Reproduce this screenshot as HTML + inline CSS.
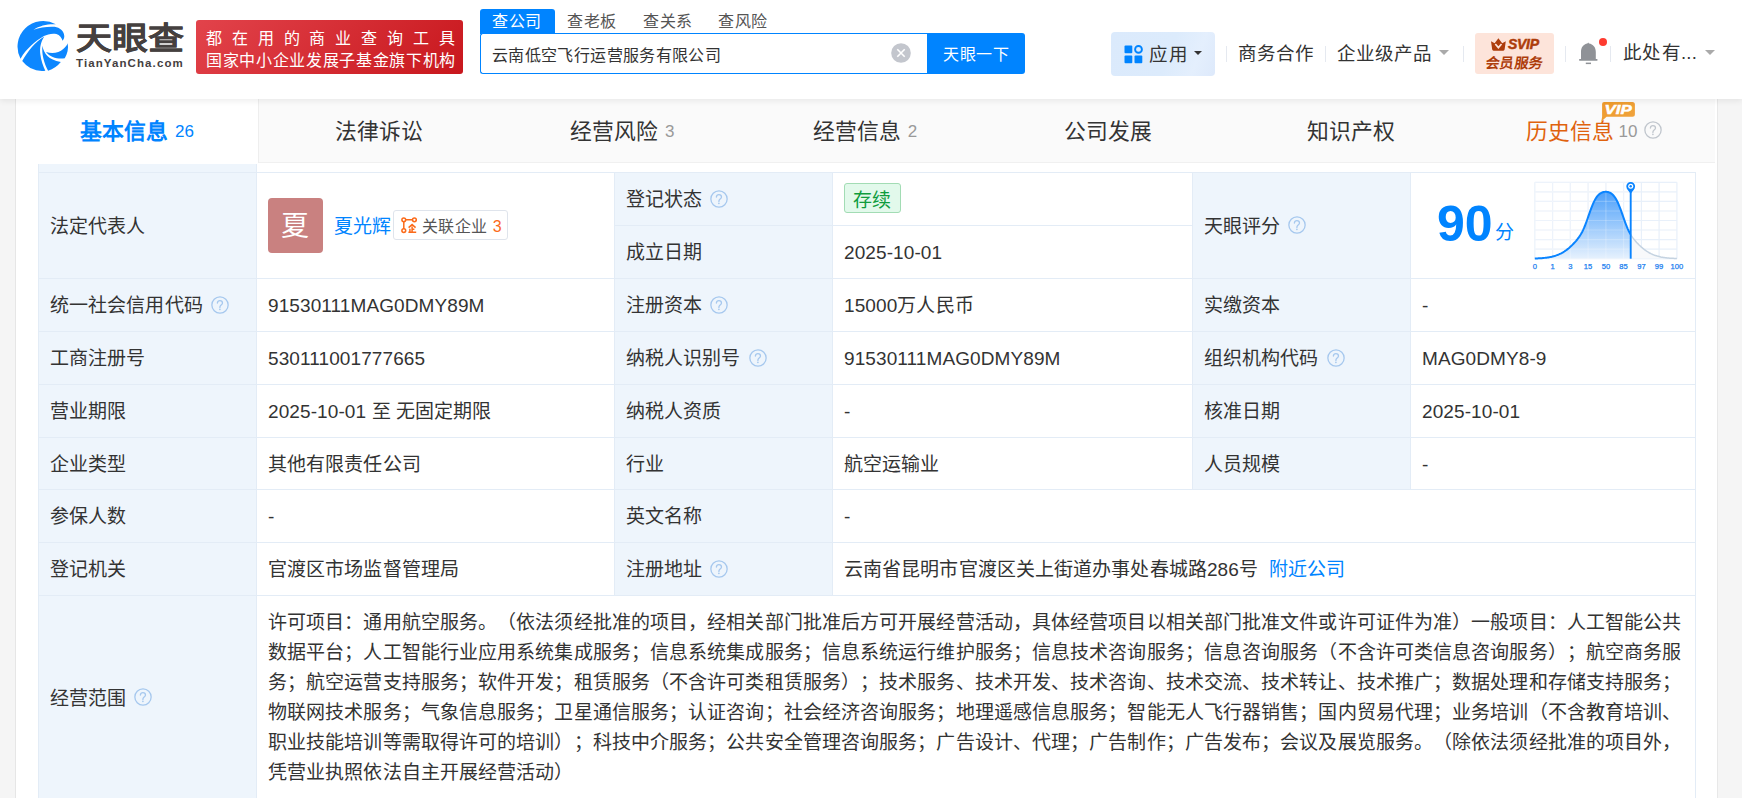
<!DOCTYPE html>
<html lang="zh-CN"><head><meta charset="utf-8">
<style>
*{box-sizing:border-box;margin:0;padding:0}
html,body{width:1742px;height:798px;overflow:hidden;background:#f5f5f5;font-family:"Liberation Sans",sans-serif;color:#333;text-spacing-trim:space-all}
.a{position:absolute}
#hdr{position:absolute;left:0;top:0;width:1742px;height:99px;background:#fff;box-shadow:0 2px 6px rgba(0,0,0,.075);z-index:5}
#panel{position:absolute;left:15px;top:99px;width:1703px;height:699px;background:#fff;border-left:1px solid #e6e6e6;border-right:1px solid #e8e8e8}
#tabs{position:absolute;left:16px;top:99px;width:1699px;height:64px;background:#fafafa;border-bottom:1px solid #f0f0f0;display:flex;z-index:3}
#tabs .t{width:242.83px;height:64px;display:flex;align-items:center;justify-content:center;line-height:28px;padding-top:2px;font-size:21.8px;color:#333;white-space:nowrap}
#tabs .t.on{width:242px;background:#fff;color:#0084ff;font-weight:bold}
#tabs .n{font-size:17px;color:#999;font-weight:normal;margin-left:7px;position:relative;top:0px}
#tabs .on .n{color:#0084ff}
.lbl{position:absolute;background:#eef5fc}
.hl{position:absolute;height:1px;background:#e3ecf6}
.vl{position:absolute;width:1px;background:#e3ecf6}
.tx{position:absolute;font-size:19px;line-height:24px;white-space:nowrap;color:#333}
.q{display:block;flex:none;margin-left:8px;margin-top:-3px}
.c{position:absolute;display:flex;align-items:center;padding-left:11px;padding-top:2px;font-size:19px;letter-spacing:0.1px;line-height:24px;white-space:nowrap;color:#333}
.av{display:inline-block;flex:none;width:55px;height:55px;border-radius:4px;background:#c98180;color:#fff;font-size:28px;line-height:58px;text-align:center;margin-right:11px;margin-top:-2px}
.lk{color:#0084ff}
.tag{display:inline-flex;align-items:center;height:30px;border:1px solid #dfe4ec;border-radius:3px;padding:0 5px 0 7px;font-size:16px;color:#555;margin-left:2px;margin-top:-3px}
.ok{display:inline-block;height:30px;width:57px;text-align:center;line-height:27.5px;padding-top:3px;padding-right:1px;border:1px solid #a2dcb4;background:#e2f9eb;color:#109c3e;border-radius:3px;margin-top:-5px}
.scope{font-size:19px;letter-spacing:0.1px;line-height:30px;color:#333;white-space:normal;word-break:break-all}
</style></head><body>
<div id="hdr">
  <svg class="a" style="left:15px;top:18px" width="55" height="55" viewBox="0 0 798 798"><g fill="#0d87ff">
<path d="M80 590 A372 372 0 0 1 592 92 C500 82 360 105 268 172 C360 140 470 122 575 128 C650 140 710 190 715 260 C717 290 705 315 690 330 C680 290 650 245 600 232 C540 218 470 235 420 262 C300 330 170 440 80 590Z"/>
<path d="M105 625 C190 480 290 350 425 270 C375 340 355 440 368 530 C378 620 410 700 440 767 A372 372 0 0 1 105 625Z"/>
<path d="M398 402 C420 520 480 600 665 640 A372 372 0 0 1 480 765 C420 650 385 520 398 402Z"/>
<path d="M450 492 C530 520 640 510 700 450 C735 420 755 395 765 368 C778 450 760 520 722 585 C620 600 510 570 450 492Z"/>
</g></svg>
  <div class="a" style="left:76px;top:22px;font-size:36px;line-height:40px;font-weight:bold;color:#45403f;-webkit-text-stroke:0.15px #45403f;transform:scaleY(0.85);transform-origin:0 0">天眼查</div>
  <div class="a" style="left:76px;top:57px;font-size:11.5px;line-height:13px;font-weight:bold;color:#45403f;letter-spacing:1.1px">TianYanCha.com</div>
  <div class="a" style="left:196px;top:20px;width:267px;height:54px;border-radius:3px;background:linear-gradient(135deg,#e2434b,#c8171d)"></div>
  <div class="a" style="left:206px;top:28px;font-size:16px;line-height:21px;color:#fff;letter-spacing:9.87px;white-space:nowrap">都在用的商业查询工具</div>
  <div class="a" style="left:206px;top:50px;font-size:16px;letter-spacing:0.66px;line-height:21px;color:#fff;white-space:nowrap">国家中小企业发展子基金旗下机构</div>

  <div class="a" style="left:480px;top:9px;width:75px;height:25px;background:#0084ff;border-radius:3px 3px 0 0"></div>
  <div class="a" style="left:492px;top:11px;font-size:16px;letter-spacing:0.6px;line-height:22px;color:#fff">查公司</div>
  <div class="a" style="left:567px;top:11px;font-size:16px;letter-spacing:0.6px;line-height:22px;color:#555">查老板</div>
  <div class="a" style="left:643px;top:11px;font-size:16px;letter-spacing:0.6px;line-height:22px;color:#555">查关系</div>
  <div class="a" style="left:718px;top:11px;font-size:16px;letter-spacing:0.6px;line-height:22px;color:#555">查风险</div>
  <div class="a" style="left:480px;top:33px;width:448px;height:41px;border:1px solid #0084ff;border-right:none;border-radius:3px 0 0 3px;background:#fff"></div>
  <div class="a" style="left:492px;top:45px;font-size:16px;letter-spacing:0.37px;line-height:22px;color:#333">云南低空飞行运营服务有限公司</div>
  <svg class="a" style="left:891px;top:43px" width="20" height="20" viewBox="0 0 20 20"><circle cx="10" cy="10" r="9.8" fill="#c3c6cd"/><path d="M6.3 6.3L13.7 13.7M13.7 6.3L6.3 13.7" stroke="#fff" stroke-width="1.6"/></svg>
  <div class="a" style="left:927px;top:33px;width:98px;height:41px;background:#0084ff;border-radius:0 3px 3px 0"></div>
  <div class="a" style="left:943px;top:44px;font-size:16px;letter-spacing:0.7px;line-height:22px;color:#fff">天眼一下</div>

  <div class="a" style="left:1111px;top:32px;width:104px;height:44px;background:linear-gradient(110deg,#dbeafc 0%,#dcebfc 55%,#e4effd 80%,#dde9fb 100%);border-radius:4px"></div>
  <svg class="a" style="left:1123.5px;top:44.5px" width="20" height="20" viewBox="0 0 20 20"><rect x="0.5" y="0.5" width="7.8" height="7.8" rx="1" fill="#0084ff"/><circle cx="14.5" cy="4.4" r="3.4" fill="none" stroke="#0084ff" stroke-width="1.9"/><rect x="0.5" y="10.5" width="7.8" height="7.8" rx="1" fill="#0084ff"/><rect x="10.5" y="10.5" width="7.8" height="7.8" rx="1" fill="#0084ff"/></svg>
  <div class="a" style="left:1149px;top:42.5px;font-size:18.5px;letter-spacing:0.8px;line-height:24px;color:#333">应用</div>
  <div class="a" style="left:1194px;top:51px;width:0;height:0;border-left:4.5px solid transparent;border-right:4.5px solid transparent;border-top:4.5px solid #333"></div>
  <div class="a" style="left:1226px;top:46px;width:1px;height:15.5px;background:#e5e9f0"></div>
  <div class="a" style="left:1238px;top:42px;font-size:18.5px;line-height:24px;color:#333">商务合作</div>
  <div class="a" style="left:1325px;top:46px;width:1px;height:15.5px;background:#e5e9f0"></div>
  <div class="a" style="left:1337px;top:42px;font-size:18.5px;line-height:24px;color:#333">企业级产品</div>
  <div class="a" style="left:1439px;top:50px;width:0;height:0;border-left:5px solid transparent;border-right:5px solid transparent;border-top:5px solid #aaa"></div>
  <div class="a" style="left:1463px;top:46px;width:1px;height:15.5px;background:#e5e9f0"></div>
  <div class="a" style="left:1475px;top:33px;width:79px;height:41px;background:#fde4da;border-radius:3px"></div>
  <svg class="a" style="left:1490px;top:38px" width="17" height="14" viewBox="0 0 17 14"><path d="M1 3.3 L4.6 5.2 L8.4 0.2 L12.2 5.2 L15.8 3.3 L14.6 11.6 Q14.4 12.7 13.3 12.7 L3.5 12.7 Q2.4 12.7 2.2 11.6Z" fill="#ad3d0b"/><path d="M5.3 6 L8.4 9.6 L11.5 6" stroke="#fde4da" stroke-width="1.7" fill="none"/></svg>
  <div class="a" style="left:1508px;top:36px;font-size:14px;line-height:17px;font-weight:bold;font-style:italic;color:#ad3d0b;-webkit-text-stroke:0.5px #ad3d0b;letter-spacing:-0.3px">SVIP</div>
  <div class="a" style="left:1484px;top:53.5px;font-size:14px;letter-spacing:0.5px;line-height:19px;font-weight:bold;color:#ad3d0b;transform:skewX(-8deg);transform-origin:0 100%">会员服务</div>
  <div class="a" style="left:1565px;top:46px;width:1px;height:15.5px;background:#e5e9f0"></div>
  <svg class="a" style="left:1578px;top:42px" width="21" height="23" viewBox="0 0 21 23"><path d="M10.2 0.4 L11 1.6 C15 2.2 17.8 5.2 17.8 10 L17.8 17 L19.4 17 L19.4 18.8 L1.2 18.8 L1.2 17 L3 17 L3 10 C3 5.2 5.6 2.2 9.4 1.6Z" fill="#8f9297"/><rect x="7.8" y="20.6" width="5.2" height="1.5" fill="#8f9297"/></svg>
  <div class="a" style="left:1598.8px;top:37.7px;width:8.2px;height:8.2px;border-radius:50%;background:#fe3b30"></div>
  <div class="a" style="left:1610px;top:46px;width:1px;height:15.5px;background:#e5e9f0"></div>
  <div class="a" style="left:1623px;top:41px;letter-spacing:0.3px;font-size:18.5px;line-height:24px;color:#333">此处有...</div>
  <div class="a" style="left:1705px;top:50px;width:0;height:0;border-left:5px solid transparent;border-right:5px solid transparent;border-top:5px solid #aaa"></div>
</div>

<div id="panel"></div>
<svg class="a" style="left:1599px;top:100px;z-index:4" width="40" height="24" viewBox="0 0 40 24"><defs><linearGradient id="vg" x1="0" y1="0" x2="1" y2="1"><stop offset="0" stop-color="#ee9a2a"/><stop offset="1" stop-color="#f0a440"/></linearGradient></defs><path d="M3.1 4.1Q3.1 2.1 5.1 2.1L33.4 2.1Q35.9 2.1 35.9 4.6L35.9 14.3Q35.9 16.8 33.4 16.8L7.6 16.8L2.3 21.6L3.1 16.8Z" fill="url(#vg)"/><text x="5.6" y="14" font-family="Liberation Sans" font-weight="bold" font-style="italic" font-size="13" fill="#fff" stroke="#fff" stroke-width="0.5" textLength="27" lengthAdjust="spacingAndGlyphs">VIP</text></svg>
<div id="tabs">
  <div class="t on">基本信息<span class="n">26</span></div>
  <div class="t" style="box-shadow:inset 1px 0 0 #eeeeee">法律诉讼</div>
  <div class="t">经营风险<span class="n">3</span></div>
  <div class="t">经营信息<span class="n">2</span></div>
  <div class="t">公司发展</div>
  <div class="t">知识产权</div>
  <div class="t" style="color:#e0620d;position:relative"><span style="position:relative;left:2.5px">历史信息</span><span class="n">10</span><svg class="q" style="margin-left:8px;margin-top:0;position:relative;left:-2px;top:-2.3px" width="18" height="18" viewBox="0 0 18 18"><circle cx="9" cy="9" r="8.15" fill="none" stroke="#c0c6cd" stroke-width="1.3"/><path d="M6.4 7.1C6.4 5.5 7.5 4.7 8.9 4.7C10.4 4.7 11.5 5.6 11.5 7C11.5 8.3 10.4 8.8 9.7 9.4C9.1 9.9 8.9 10.4 8.9 11.4" fill="none" stroke="#c0c6cd" stroke-width="1.3" stroke-linecap="round"/><circle cx="8.9" cy="13.3" r="0.85" fill="#c0c6cd"/></svg></div>
</div>

<div id="tbl">
<div class="lbl" style="left:38px;top:164px;width:218px;height:635px"></div>
<div class="lbl" style="left:614px;top:172px;width:218px;height:423px"></div>
<div class="lbl" style="left:1192px;top:172px;width:218px;height:317px"></div>
<div class="hl" style="left:38px;top:172px;width:1658px"></div>
<div class="hl" style="left:38px;top:278px;width:1658px"></div>
<div class="hl" style="left:38px;top:331px;width:1658px"></div>
<div class="hl" style="left:38px;top:384px;width:1658px"></div>
<div class="hl" style="left:38px;top:437px;width:1658px"></div>
<div class="hl" style="left:38px;top:489px;width:1658px"></div>
<div class="hl" style="left:38px;top:542px;width:1658px"></div>
<div class="hl" style="left:38px;top:595px;width:1658px"></div>
<div class="hl" style="left:614px;top:225px;width:578px"></div>
<div class="vl" style="left:38px;top:164px;height:635px"></div>
<div class="vl" style="left:256px;top:164px;height:635px"></div>
<div class="vl" style="left:1695px;top:172px;height:627px"></div>
<div class="vl" style="left:614px;top:172px;height:423px"></div>
<div class="vl" style="left:832px;top:172px;height:423px"></div>
<div class="vl" style="left:1192px;top:172px;height:317px"></div>
<div class="vl" style="left:1410px;top:172px;height:317px"></div>

<div class="c" style="left:39px;top:173px;width:217px;height:105px;">法定代表人</div>
<div class="c" style="left:257px;top:173px;width:357px;height:105px;"><span class="av">夏</span><span class="lk">夏光辉</span><span class="tag"><svg width="17" height="17" viewBox="0 0 17 17" style="margin-right:4px;margin-top:1px"><g fill="none" stroke="#fb6a1a" stroke-width="1.5"><circle cx="2.8" cy="2.8" r="1.9"/><circle cx="13.4" cy="2.8" r="1.9"/><circle cx="2.8" cy="13.6" r="1.9"/><path d="M2.8 4.7v7M4.7 2.8h6.8"/><path d="M7.6 10.6l3.5-3 3.5 3M11.1 9.6v5.3M11.1 12.2h2.3M8.9 11.8v3.1M7.4 15.3h7.8"/></g></svg><span style="position:relative;top:1.5px">关联企业<span style="color:#fb6a1a;margin-left:6px">3</span></span></span></div>
<div class="c" style="left:615px;top:173px;width:217px;height:52px;">登记状态<svg class="q" width="18" height="18" viewBox="0 0 18 18"><circle cx="9" cy="9" r="8.15" fill="none" stroke="#a6c8ee" stroke-width="1.3"/><path d="M6.4 7.1C6.4 5.5 7.5 4.7 8.9 4.7C10.4 4.7 11.5 5.6 11.5 7C11.5 8.3 10.4 8.8 9.7 9.4C9.1 9.9 8.9 10.4 8.9 11.4" fill="none" stroke="#a6c8ee" stroke-width="1.3" stroke-linecap="round"/><circle cx="8.9" cy="13.3" r="0.85" fill="#a6c8ee"/></svg></div>
<div class="c" style="left:833px;top:173px;width:359px;height:52px;"><span class="ok">存续</span></div>
<div class="c" style="left:615px;top:226px;width:217px;height:52px;">成立日期</div>
<div class="c" style="left:833px;top:226px;width:359px;height:52px;">2025-10-01</div>
<div class="c" style="left:1193px;top:173px;width:217px;height:105px;">天眼评分<svg class="q" width="18" height="18" viewBox="0 0 18 18"><circle cx="9" cy="9" r="8.15" fill="none" stroke="#a6c8ee" stroke-width="1.3"/><path d="M6.4 7.1C6.4 5.5 7.5 4.7 8.9 4.7C10.4 4.7 11.5 5.6 11.5 7C11.5 8.3 10.4 8.8 9.7 9.4C9.1 9.9 8.9 10.4 8.9 11.4" fill="none" stroke="#a6c8ee" stroke-width="1.3" stroke-linecap="round"/><circle cx="8.9" cy="13.3" r="0.85" fill="#a6c8ee"/></svg></div>
<div class="c" style="left:39px;top:279px;width:217px;height:52px;">统一社会信用代码<svg class="q" width="18" height="18" viewBox="0 0 18 18"><circle cx="9" cy="9" r="8.15" fill="none" stroke="#a6c8ee" stroke-width="1.3"/><path d="M6.4 7.1C6.4 5.5 7.5 4.7 8.9 4.7C10.4 4.7 11.5 5.6 11.5 7C11.5 8.3 10.4 8.8 9.7 9.4C9.1 9.9 8.9 10.4 8.9 11.4" fill="none" stroke="#a6c8ee" stroke-width="1.3" stroke-linecap="round"/><circle cx="8.9" cy="13.3" r="0.85" fill="#a6c8ee"/></svg></div>
<div class="c" style="left:257px;top:279px;width:357px;height:52px;">91530111MAG0DMY89M</div>
<div class="c" style="left:615px;top:279px;width:217px;height:52px;">注册资本<svg class="q" width="18" height="18" viewBox="0 0 18 18"><circle cx="9" cy="9" r="8.15" fill="none" stroke="#a6c8ee" stroke-width="1.3"/><path d="M6.4 7.1C6.4 5.5 7.5 4.7 8.9 4.7C10.4 4.7 11.5 5.6 11.5 7C11.5 8.3 10.4 8.8 9.7 9.4C9.1 9.9 8.9 10.4 8.9 11.4" fill="none" stroke="#a6c8ee" stroke-width="1.3" stroke-linecap="round"/><circle cx="8.9" cy="13.3" r="0.85" fill="#a6c8ee"/></svg></div>
<div class="c" style="left:833px;top:279px;width:359px;height:52px;">15000万人民币</div>
<div class="c" style="left:1193px;top:279px;width:217px;height:52px;">实缴资本</div>
<div class="c" style="left:1411px;top:279px;width:284px;height:52px;">-</div>
<div class="c" style="left:39px;top:332px;width:217px;height:52px;">工商注册号</div>
<div class="c" style="left:257px;top:332px;width:357px;height:52px;">530111001777665</div>
<div class="c" style="left:615px;top:332px;width:217px;height:52px;">纳税人识别号<svg class="q" width="18" height="18" viewBox="0 0 18 18"><circle cx="9" cy="9" r="8.15" fill="none" stroke="#a6c8ee" stroke-width="1.3"/><path d="M6.4 7.1C6.4 5.5 7.5 4.7 8.9 4.7C10.4 4.7 11.5 5.6 11.5 7C11.5 8.3 10.4 8.8 9.7 9.4C9.1 9.9 8.9 10.4 8.9 11.4" fill="none" stroke="#a6c8ee" stroke-width="1.3" stroke-linecap="round"/><circle cx="8.9" cy="13.3" r="0.85" fill="#a6c8ee"/></svg></div>
<div class="c" style="left:833px;top:332px;width:359px;height:52px;">91530111MAG0DMY89M</div>
<div class="c" style="left:1193px;top:332px;width:217px;height:52px;">组织机构代码<svg class="q" width="18" height="18" viewBox="0 0 18 18"><circle cx="9" cy="9" r="8.15" fill="none" stroke="#a6c8ee" stroke-width="1.3"/><path d="M6.4 7.1C6.4 5.5 7.5 4.7 8.9 4.7C10.4 4.7 11.5 5.6 11.5 7C11.5 8.3 10.4 8.8 9.7 9.4C9.1 9.9 8.9 10.4 8.9 11.4" fill="none" stroke="#a6c8ee" stroke-width="1.3" stroke-linecap="round"/><circle cx="8.9" cy="13.3" r="0.85" fill="#a6c8ee"/></svg></div>
<div class="c" style="left:1411px;top:332px;width:284px;height:52px;">MAG0DMY8-9</div>
<div class="c" style="left:39px;top:385px;width:217px;height:52px;">营业期限</div>
<div class="c" style="left:257px;top:385px;width:357px;height:52px;">2025-10-01 至 无固定期限</div>
<div class="c" style="left:615px;top:385px;width:217px;height:52px;">纳税人资质</div>
<div class="c" style="left:833px;top:385px;width:359px;height:52px;">-</div>
<div class="c" style="left:1193px;top:385px;width:217px;height:52px;">核准日期</div>
<div class="c" style="left:1411px;top:385px;width:284px;height:52px;">2025-10-01</div>
<div class="c" style="left:39px;top:438px;width:217px;height:51px;">企业类型</div>
<div class="c" style="left:257px;top:438px;width:357px;height:51px;">其他有限责任公司</div>
<div class="c" style="left:615px;top:438px;width:217px;height:51px;">行业</div>
<div class="c" style="left:833px;top:438px;width:359px;height:51px;">航空运输业</div>
<div class="c" style="left:1193px;top:438px;width:217px;height:51px;">人员规模</div>
<div class="c" style="left:1411px;top:438px;width:284px;height:51px;">-</div>
<div class="c" style="left:39px;top:490px;width:217px;height:52px;">参保人数</div>
<div class="c" style="left:257px;top:490px;width:357px;height:52px;">-</div>
<div class="c" style="left:615px;top:490px;width:217px;height:52px;">英文名称</div>
<div class="c" style="left:833px;top:490px;width:862px;height:52px;">-</div>
<div class="c" style="left:39px;top:543px;width:217px;height:52px;">登记机关</div>
<div class="c" style="left:257px;top:543px;width:357px;height:52px;">官渡区市场监督管理局</div>
<div class="c" style="left:615px;top:543px;width:217px;height:52px;">注册地址<svg class="q" width="18" height="18" viewBox="0 0 18 18"><circle cx="9" cy="9" r="8.15" fill="none" stroke="#a6c8ee" stroke-width="1.3"/><path d="M6.4 7.1C6.4 5.5 7.5 4.7 8.9 4.7C10.4 4.7 11.5 5.6 11.5 7C11.5 8.3 10.4 8.8 9.7 9.4C9.1 9.9 8.9 10.4 8.9 11.4" fill="none" stroke="#a6c8ee" stroke-width="1.3" stroke-linecap="round"/><circle cx="8.9" cy="13.3" r="0.85" fill="#a6c8ee"/></svg></div>
<div class="c" style="left:833px;top:543px;width:862px;height:52px;">云南省昆明市官渡区关上街道办事处春城路286号<span class="lk" style="margin-left:11px">附近公司</span></div>
<div class="c" style="left:39px;top:596px;width:217px;height:203px;">经营范围<svg class="q" width="18" height="18" viewBox="0 0 18 18"><circle cx="9" cy="9" r="8.15" fill="none" stroke="#a6c8ee" stroke-width="1.3"/><path d="M6.4 7.1C6.4 5.5 7.5 4.7 8.9 4.7C10.4 4.7 11.5 5.6 11.5 7C11.5 8.3 10.4 8.8 9.7 9.4C9.1 9.9 8.9 10.4 8.9 11.4" fill="none" stroke="#a6c8ee" stroke-width="1.3" stroke-linecap="round"/><circle cx="8.9" cy="13.3" r="0.85" fill="#a6c8ee"/></svg></div>
<div class="a scope" style="left:268px;top:608px;width:1416px">许可项目：通用航空服务。（依法须经批准的项目，经相关部门批准后方可开展经营活动，具体经营项目以相关部门批准文件或许可证件为准）一般项目：人工智能公共数据平台；人工智能行业应用系统集成服务；信息系统集成服务；信息系统运行维护服务；信息技术咨询服务；信息咨询服务（不含许可类信息咨询服务）；航空商务服务；航空运营支持服务；软件开发；租赁服务（不含许可类租赁服务）；技术服务、技术开发、技术咨询、技术交流、技术转让、技术推广；数据处理和存储支持服务；物联网技术服务；气象信息服务；卫星通信服务；认证咨询；社会经济咨询服务；地理遥感信息服务；智能无人飞行器销售；国内贸易代理；业务培训（不含教育培训、职业技能培训等需取得许可的培训）；科技中介服务；公共安全管理咨询服务；广告设计、代理；广告制作；广告发布；会议及展览服务。（除依法须经批准的项目外，凭营业执照依法自主开展经营活动）</div>

<svg class="a" style="left:1528px;top:176px" width="160" height="100" viewBox="0 0 160 100">
<defs><linearGradient id="gf" x1="0" y1="15.799999999999983" x2="0" y2="82.69999999999999" gradientUnits="userSpaceOnUse"><stop offset="0" stop-color="#4da0fa"/><stop offset="1" stop-color="#e6f1fd"/></linearGradient>
<clipPath id="cl"><rect x="0" y="0" width="102.7" height="100"/></clipPath><clipPath id="cr"><rect x="102.7" y="0" width="100" height="100"/></clipPath></defs>
<g stroke="#e8f0fa" stroke-width="1.2"><line x1="6.8" y1="6.3" x2="6.8" y2="82.7"/><line x1="24.6" y1="6.3" x2="24.6" y2="82.7"/><line x1="42.3" y1="6.3" x2="42.3" y2="82.7"/><line x1="60.1" y1="6.3" x2="60.1" y2="82.7"/><line x1="77.9" y1="6.3" x2="77.9" y2="82.7"/><line x1="95.6" y1="6.3" x2="95.6" y2="82.7"/><line x1="113.4" y1="6.3" x2="113.4" y2="82.7"/><line x1="131.1" y1="6.3" x2="131.1" y2="82.7"/><line x1="148.9" y1="6.3" x2="148.9" y2="82.7"/><line x1="6.8" y1="6.3" x2="148.9" y2="6.3"/><line x1="6.8" y1="15.9" x2="148.9" y2="15.9"/><line x1="6.8" y1="25.4" x2="148.9" y2="25.4"/><line x1="6.8" y1="35.0" x2="148.9" y2="35.0"/><line x1="6.8" y1="44.5" x2="148.9" y2="44.5"/><line x1="6.8" y1="54.0" x2="148.9" y2="54.0"/><line x1="6.8" y1="63.6" x2="148.9" y2="63.6"/><line x1="6.8" y1="73.1" x2="148.9" y2="73.1"/><line x1="6.8" y1="82.7" x2="148.9" y2="82.7"/></g>
<path d="M6.80 82.50 L7.69 82.47 L8.59 82.43 L9.48 82.40 L10.37 82.35 L11.27 82.31 L12.16 82.25 L13.06 82.19 L13.95 82.13 L14.84 82.05 L15.74 81.97 L16.63 81.88 L17.52 81.78 L18.42 81.66 L19.31 81.54 L20.21 81.40 L21.10 81.25 L21.99 81.09 L22.89 80.90 L23.78 80.71 L24.67 80.49 L25.57 80.25 L26.46 80.00 L27.36 79.72 L28.25 79.42 L29.14 79.09 L30.04 78.74 L30.93 78.37 L31.82 77.96 L32.72 77.53 L33.61 77.07 L34.51 76.57 L35.40 76.05 L36.29 75.49 L37.19 74.89 L38.08 74.27 L38.97 73.61 L39.87 72.91 L40.76 72.18 L41.65 71.41 L42.55 70.61 L43.44 69.78 L44.34 68.91 L45.23 68.00 L46.12 67.06 L47.02 66.08 L47.91 65.07 L48.80 64.01 L49.70 62.89 L50.59 61.71 L51.49 60.45 L52.38 59.08 L53.27 57.58 L54.17 55.94 L55.06 54.13 L55.95 52.15 L56.85 50.01 L57.74 47.70 L58.64 45.27 L59.53 42.74 L60.42 40.16 L61.32 37.58 L62.21 35.05 L63.10 32.60 L64.00 30.28 L64.89 28.12 L65.78 26.14 L66.68 24.36 L67.57 22.77 L68.47 21.39 L69.36 20.19 L70.25 19.17 L71.15 18.31 L72.04 17.61 L72.93 17.04 L73.83 16.60 L74.72 16.26 L75.62 16.02 L76.51 15.87 L77.40 15.80 L78.30 15.82 L79.19 15.91 L80.08 16.09 L80.98 16.36 L81.87 16.73 L82.77 17.22 L83.66 17.83 L84.55 18.58 L85.45 19.49 L86.34 20.57 L87.23 21.83 L88.13 23.28 L89.02 24.94 L89.92 26.79 L90.81 28.83 L91.70 31.04 L92.60 33.41 L93.49 35.89 L94.38 38.45 L95.28 41.03 L96.17 43.60 L97.06 46.10 L97.96 48.49 L98.85 50.74 L99.75 52.84 L100.64 54.76 L101.53 56.51 L102.43 58.10 L103.32 59.55 L104.21 60.88 L105.11 62.12 L106.00 63.28 L106.90 64.37 L107.79 65.41 L108.68 66.42 L109.58 67.38 L110.47 68.31 L111.36 69.20 L112.26 70.06 L113.15 70.88 L114.05 71.67 L114.94 72.43 L115.83 73.15 L116.73 73.83 L117.62 74.48 L118.51 75.10 L119.41 75.68 L120.30 76.23 L121.19 76.74 L122.09 77.22 L122.98 77.68 L123.88 78.10 L124.77 78.50 L125.66 78.86 L126.56 79.21 L127.45 79.52 L128.34 79.81 L129.24 80.09 L130.13 80.33 L131.03 80.56 L131.92 80.77 L132.81 80.97 L133.71 81.14 L134.60 81.30 L135.49 81.45 L136.39 81.58 L137.28 81.70 L138.18 81.81 L139.07 81.91 L139.96 82.00 L140.86 82.08 L141.75 82.15 L142.64 82.21 L143.54 82.27 L144.43 82.32 L145.33 82.37 L146.22 82.41 L147.11 82.45 L148.01 82.48 L148.90 82.51 Z" fill="#f8f9fb" clip-path="url(#cr)"/>
<path d="M6.80 82.50 L7.69 82.47 L8.59 82.43 L9.48 82.40 L10.37 82.35 L11.27 82.31 L12.16 82.25 L13.06 82.19 L13.95 82.13 L14.84 82.05 L15.74 81.97 L16.63 81.88 L17.52 81.78 L18.42 81.66 L19.31 81.54 L20.21 81.40 L21.10 81.25 L21.99 81.09 L22.89 80.90 L23.78 80.71 L24.67 80.49 L25.57 80.25 L26.46 80.00 L27.36 79.72 L28.25 79.42 L29.14 79.09 L30.04 78.74 L30.93 78.37 L31.82 77.96 L32.72 77.53 L33.61 77.07 L34.51 76.57 L35.40 76.05 L36.29 75.49 L37.19 74.89 L38.08 74.27 L38.97 73.61 L39.87 72.91 L40.76 72.18 L41.65 71.41 L42.55 70.61 L43.44 69.78 L44.34 68.91 L45.23 68.00 L46.12 67.06 L47.02 66.08 L47.91 65.07 L48.80 64.01 L49.70 62.89 L50.59 61.71 L51.49 60.45 L52.38 59.08 L53.27 57.58 L54.17 55.94 L55.06 54.13 L55.95 52.15 L56.85 50.01 L57.74 47.70 L58.64 45.27 L59.53 42.74 L60.42 40.16 L61.32 37.58 L62.21 35.05 L63.10 32.60 L64.00 30.28 L64.89 28.12 L65.78 26.14 L66.68 24.36 L67.57 22.77 L68.47 21.39 L69.36 20.19 L70.25 19.17 L71.15 18.31 L72.04 17.61 L72.93 17.04 L73.83 16.60 L74.72 16.26 L75.62 16.02 L76.51 15.87 L77.40 15.80 L78.30 15.82 L79.19 15.91 L80.08 16.09 L80.98 16.36 L81.87 16.73 L82.77 17.22 L83.66 17.83 L84.55 18.58 L85.45 19.49 L86.34 20.57 L87.23 21.83 L88.13 23.28 L89.02 24.94 L89.92 26.79 L90.81 28.83 L91.70 31.04 L92.60 33.41 L93.49 35.89 L94.38 38.45 L95.28 41.03 L96.17 43.60 L97.06 46.10 L97.96 48.49 L98.85 50.74 L99.75 52.84 L100.64 54.76 L101.53 56.51 L102.43 58.10 L103.32 59.55 L104.21 60.88 L105.11 62.12 L106.00 63.28 L106.90 64.37 L107.79 65.41 L108.68 66.42 L109.58 67.38 L110.47 68.31 L111.36 69.20 L112.26 70.06 L113.15 70.88 L114.05 71.67 L114.94 72.43 L115.83 73.15 L116.73 73.83 L117.62 74.48 L118.51 75.10 L119.41 75.68 L120.30 76.23 L121.19 76.74 L122.09 77.22 L122.98 77.68 L123.88 78.10 L124.77 78.50 L125.66 78.86 L126.56 79.21 L127.45 79.52 L128.34 79.81 L129.24 80.09 L130.13 80.33 L131.03 80.56 L131.92 80.77 L132.81 80.97 L133.71 81.14 L134.60 81.30 L135.49 81.45 L136.39 81.58 L137.28 81.70 L138.18 81.81 L139.07 81.91 L139.96 82.00 L140.86 82.08 L141.75 82.15 L142.64 82.21 L143.54 82.27 L144.43 82.32 L145.33 82.37 L146.22 82.41 L147.11 82.45 L148.01 82.48 L148.90 82.51" fill="none" stroke="#c5d3e1" stroke-width="1.5" clip-path="url(#cr)"/>
<path d="M6.80 82.50 L7.69 82.47 L8.59 82.43 L9.48 82.40 L10.37 82.35 L11.27 82.31 L12.16 82.25 L13.06 82.19 L13.95 82.13 L14.84 82.05 L15.74 81.97 L16.63 81.88 L17.52 81.78 L18.42 81.66 L19.31 81.54 L20.21 81.40 L21.10 81.25 L21.99 81.09 L22.89 80.90 L23.78 80.71 L24.67 80.49 L25.57 80.25 L26.46 80.00 L27.36 79.72 L28.25 79.42 L29.14 79.09 L30.04 78.74 L30.93 78.37 L31.82 77.96 L32.72 77.53 L33.61 77.07 L34.51 76.57 L35.40 76.05 L36.29 75.49 L37.19 74.89 L38.08 74.27 L38.97 73.61 L39.87 72.91 L40.76 72.18 L41.65 71.41 L42.55 70.61 L43.44 69.78 L44.34 68.91 L45.23 68.00 L46.12 67.06 L47.02 66.08 L47.91 65.07 L48.80 64.01 L49.70 62.89 L50.59 61.71 L51.49 60.45 L52.38 59.08 L53.27 57.58 L54.17 55.94 L55.06 54.13 L55.95 52.15 L56.85 50.01 L57.74 47.70 L58.64 45.27 L59.53 42.74 L60.42 40.16 L61.32 37.58 L62.21 35.05 L63.10 32.60 L64.00 30.28 L64.89 28.12 L65.78 26.14 L66.68 24.36 L67.57 22.77 L68.47 21.39 L69.36 20.19 L70.25 19.17 L71.15 18.31 L72.04 17.61 L72.93 17.04 L73.83 16.60 L74.72 16.26 L75.62 16.02 L76.51 15.87 L77.40 15.80 L78.30 15.82 L79.19 15.91 L80.08 16.09 L80.98 16.36 L81.87 16.73 L82.77 17.22 L83.66 17.83 L84.55 18.58 L85.45 19.49 L86.34 20.57 L87.23 21.83 L88.13 23.28 L89.02 24.94 L89.92 26.79 L90.81 28.83 L91.70 31.04 L92.60 33.41 L93.49 35.89 L94.38 38.45 L95.28 41.03 L96.17 43.60 L97.06 46.10 L97.96 48.49 L98.85 50.74 L99.75 52.84 L100.64 54.76 L101.53 56.51 L102.43 58.10 L103.32 59.55 L104.21 60.88 L105.11 62.12 L106.00 63.28 L106.90 64.37 L107.79 65.41 L108.68 66.42 L109.58 67.38 L110.47 68.31 L111.36 69.20 L112.26 70.06 L113.15 70.88 L114.05 71.67 L114.94 72.43 L115.83 73.15 L116.73 73.83 L117.62 74.48 L118.51 75.10 L119.41 75.68 L120.30 76.23 L121.19 76.74 L122.09 77.22 L122.98 77.68 L123.88 78.10 L124.77 78.50 L125.66 78.86 L126.56 79.21 L127.45 79.52 L128.34 79.81 L129.24 80.09 L130.13 80.33 L131.03 80.56 L131.92 80.77 L132.81 80.97 L133.71 81.14 L134.60 81.30 L135.49 81.45 L136.39 81.58 L137.28 81.70 L138.18 81.81 L139.07 81.91 L139.96 82.00 L140.86 82.08 L141.75 82.15 L142.64 82.21 L143.54 82.27 L144.43 82.32 L145.33 82.37 L146.22 82.41 L147.11 82.45 L148.01 82.48 L148.90 82.51 Z" fill="url(#gf)" clip-path="url(#cl)"/>
<g stroke="#ffffff" stroke-opacity="0.22" stroke-width="1.2" clip-path="url(#cl)"><line x1="6.8" y1="6.3" x2="6.8" y2="82.7"/><line x1="24.6" y1="6.3" x2="24.6" y2="82.7"/><line x1="42.3" y1="6.3" x2="42.3" y2="82.7"/><line x1="60.1" y1="6.3" x2="60.1" y2="82.7"/><line x1="77.9" y1="6.3" x2="77.9" y2="82.7"/><line x1="95.6" y1="6.3" x2="95.6" y2="82.7"/><line x1="113.4" y1="6.3" x2="113.4" y2="82.7"/><line x1="131.1" y1="6.3" x2="131.1" y2="82.7"/><line x1="148.9" y1="6.3" x2="148.9" y2="82.7"/><line x1="6.8" y1="6.3" x2="148.9" y2="6.3"/><line x1="6.8" y1="15.9" x2="148.9" y2="15.9"/><line x1="6.8" y1="25.4" x2="148.9" y2="25.4"/><line x1="6.8" y1="35.0" x2="148.9" y2="35.0"/><line x1="6.8" y1="44.5" x2="148.9" y2="44.5"/><line x1="6.8" y1="54.0" x2="148.9" y2="54.0"/><line x1="6.8" y1="63.6" x2="148.9" y2="63.6"/><line x1="6.8" y1="73.1" x2="148.9" y2="73.1"/><line x1="6.8" y1="82.7" x2="148.9" y2="82.7"/></g>
<path d="M6.80 82.50 L7.69 82.47 L8.59 82.43 L9.48 82.40 L10.37 82.35 L11.27 82.31 L12.16 82.25 L13.06 82.19 L13.95 82.13 L14.84 82.05 L15.74 81.97 L16.63 81.88 L17.52 81.78 L18.42 81.66 L19.31 81.54 L20.21 81.40 L21.10 81.25 L21.99 81.09 L22.89 80.90 L23.78 80.71 L24.67 80.49 L25.57 80.25 L26.46 80.00 L27.36 79.72 L28.25 79.42 L29.14 79.09 L30.04 78.74 L30.93 78.37 L31.82 77.96 L32.72 77.53 L33.61 77.07 L34.51 76.57 L35.40 76.05 L36.29 75.49 L37.19 74.89 L38.08 74.27 L38.97 73.61 L39.87 72.91 L40.76 72.18 L41.65 71.41 L42.55 70.61 L43.44 69.78 L44.34 68.91 L45.23 68.00 L46.12 67.06 L47.02 66.08 L47.91 65.07 L48.80 64.01 L49.70 62.89 L50.59 61.71 L51.49 60.45 L52.38 59.08 L53.27 57.58 L54.17 55.94 L55.06 54.13 L55.95 52.15 L56.85 50.01 L57.74 47.70 L58.64 45.27 L59.53 42.74 L60.42 40.16 L61.32 37.58 L62.21 35.05 L63.10 32.60 L64.00 30.28 L64.89 28.12 L65.78 26.14 L66.68 24.36 L67.57 22.77 L68.47 21.39 L69.36 20.19 L70.25 19.17 L71.15 18.31 L72.04 17.61 L72.93 17.04 L73.83 16.60 L74.72 16.26 L75.62 16.02 L76.51 15.87 L77.40 15.80 L78.30 15.82 L79.19 15.91 L80.08 16.09 L80.98 16.36 L81.87 16.73 L82.77 17.22 L83.66 17.83 L84.55 18.58 L85.45 19.49 L86.34 20.57 L87.23 21.83 L88.13 23.28 L89.02 24.94 L89.92 26.79 L90.81 28.83 L91.70 31.04 L92.60 33.41 L93.49 35.89 L94.38 38.45 L95.28 41.03 L96.17 43.60 L97.06 46.10 L97.96 48.49 L98.85 50.74 L99.75 52.84 L100.64 54.76 L101.53 56.51 L102.43 58.10 L103.32 59.55 L104.21 60.88 L105.11 62.12 L106.00 63.28 L106.90 64.37 L107.79 65.41 L108.68 66.42 L109.58 67.38 L110.47 68.31 L111.36 69.20 L112.26 70.06 L113.15 70.88 L114.05 71.67 L114.94 72.43 L115.83 73.15 L116.73 73.83 L117.62 74.48 L118.51 75.10 L119.41 75.68 L120.30 76.23 L121.19 76.74 L122.09 77.22 L122.98 77.68 L123.88 78.10 L124.77 78.50 L125.66 78.86 L126.56 79.21 L127.45 79.52 L128.34 79.81 L129.24 80.09 L130.13 80.33 L131.03 80.56 L131.92 80.77 L132.81 80.97 L133.71 81.14 L134.60 81.30 L135.49 81.45 L136.39 81.58 L137.28 81.70 L138.18 81.81 L139.07 81.91 L139.96 82.00 L140.86 82.08 L141.75 82.15 L142.64 82.21 L143.54 82.27 L144.43 82.32 L145.33 82.37 L146.22 82.41 L147.11 82.45 L148.01 82.48 L148.90 82.51" fill="none" stroke="#0a84ff" stroke-width="2" clip-path="url(#cl)"/>
<line x1="102.7" y1="14.300000000000011" x2="102.7" y2="82.7" stroke="#0a84ff" stroke-width="1.9"/>
<path d="M102.70 17.70 C101.20 15.80 98.30 13.30 98.30 10.30 A4.4 4.4 0 1 1 107.10 10.30 C107.10 13.30 104.20 15.80 102.70 17.70Z" fill="#0a84ff"/>
<circle cx="102.7" cy="10.3" r="2.5" fill="#fff"/><circle cx="102.7" cy="10.3" r="1.2" fill="#0a84ff"/>
<g font-family="Liberation Sans" font-size="7.6" fill="#1b80f0" stroke="#1b80f0" stroke-width="0.25"><text x="6.8" y="93.4" text-anchor="middle">0</text><text x="24.6" y="93.4" text-anchor="middle">1</text><text x="42.3" y="93.4" text-anchor="middle">3</text><text x="60.1" y="93.4" text-anchor="middle">15</text><text x="77.9" y="93.4" text-anchor="middle">50</text><text x="95.6" y="93.4" text-anchor="middle">85</text><text x="113.4" y="93.4" text-anchor="middle">97</text><text x="131.1" y="93.4" text-anchor="middle">99</text><text x="148.9" y="93.4" text-anchor="middle">100</text></g>
</svg>
<div class="a" style="left:1437px;top:196px;font-size:50px;line-height:56px;font-weight:bold;color:#0084ff">90</div>
<div class="a" style="left:1495px;top:221px;font-size:19px;line-height:24px;color:#0084ff">分</div>

</div>
</body></html>
